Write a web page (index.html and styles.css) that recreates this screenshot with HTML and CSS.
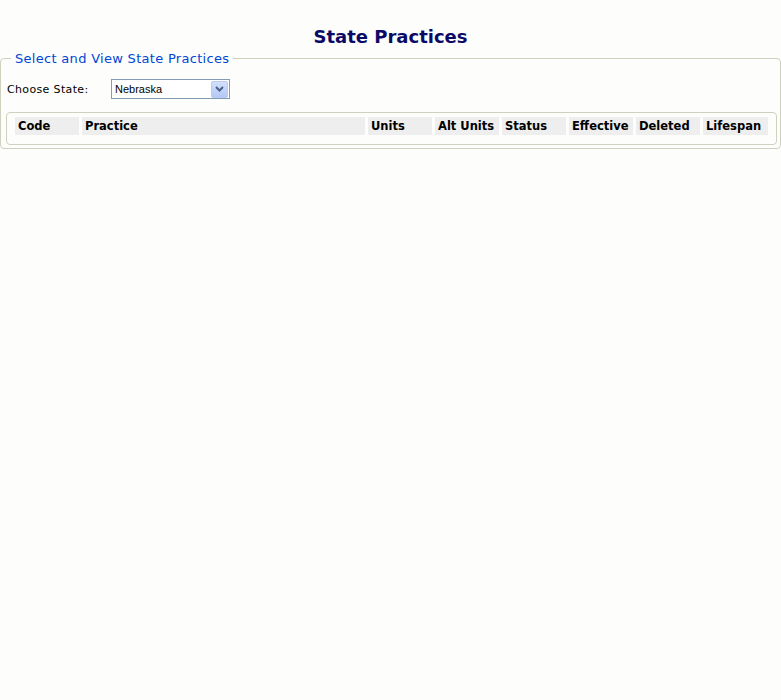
FILE: index.html
```html
<!DOCTYPE html>
<html>
<head>
<meta charset="utf-8">
<title>State Practices</title>
<link rel="stylesheet" href="styles.css">
</head>
<body>
<h1 class="page-title">State Practices</h1>
<fieldset class="group">
  <legend class="group-legend">Select and View State Practices</legend>
  <div class="state-row">
    <label class="state-label">Choose State:</label>
    <div class="select">
      <span class="select-text">Nebraska</span>
      <span class="select-btn">
        <svg width="9" height="6" viewBox="0 0 9 6"><path d="M1 1 L4.5 4.5 L8 1" fill="none" stroke="#4d6185" stroke-width="2"/></svg>
      </span>
    </div>
  </div>
  <fieldset class="results">
    <div class="grid-head">
      <div class="hcell">Code</div>
      <div class="hcell">Practice</div>
      <div class="hcell">Units</div>
      <div class="hcell">Alt Units</div>
      <div class="hcell">Status</div>
      <div class="hcell">Effective</div>
      <div class="hcell">Deleted</div>
      <div class="hcell">Lifespan</div>
    </div>
  </fieldset>
</fieldset>
</body>
</html>
```
FILE: styles.css
```css
html, body {
  margin: 0;
  padding: 0;
  background: #fdfefc;
}
body {
  font-family: "DejaVu Sans", Verdana, sans-serif;
  color: #000;
}
.page-title {
  margin: 26px 0 1px 0;
  font-size: 18px;
  line-height: 22px;
  font-weight: bold;
  text-align: center;
  color: #0a0a66;
}
.group {
  margin: 0;
  padding: 0 3px 3px 5px;
  border: 1px solid #d0d0bf;
  border-radius: 4px;
  min-width: 0;
}
.group-legend {
  margin-left: 5px;
  padding: 2px 4px 0 4px;
  font-size: 13px;
  line-height: 16px;
  letter-spacing: 0.3px;
  color: #0046d5;
}
.state-row {
  display: flex;
  align-items: center;
  margin-top: 12px;
}
.state-label {
  width: 104px;
  font-size: 11px;
  line-height: 14px;
  letter-spacing: 0.35px;
  padding-left: 1px;
  padding-top: 2px;
}
.select {
  width: 117px;
  height: 18px;
  border: 1px solid #7f9db9;
  background: #fff;
  display: flex;
  align-items: center;
  justify-content: space-between;
}
.select-text {
  font-family: "Liberation Sans", Arial, sans-serif;
  font-size: 11px;
  padding-left: 3px;
}
.select-btn {
  width: 15px;
  height: 15px;
  margin-right: 1px;
  border: 1px solid #b9cbf3;
  border-radius: 2px;
  background: linear-gradient(#d3e0fc, #b4c8f6);
  display: flex;
  align-items: center;
  justify-content: center;
}
.results {
  margin: 13px 0 0 0;
  padding: 4px 8px 9px 8px;
  border: 1px solid #d0d0bf;
  border-radius: 4px;
  min-width: 0;
}
.grid-head {
  display: grid;
  grid-template-columns: 64px 1fr 64px 64px 64px 64px 64px 65px;
  column-gap: 3px;
}
.hcell {
  background: #eeeeee;
  font-size: 11.5px;
  font-weight: bold;
  line-height: 18px;
  height: 18px;
  padding-left: 3px;
  white-space: nowrap;
  overflow: hidden;
}
```
